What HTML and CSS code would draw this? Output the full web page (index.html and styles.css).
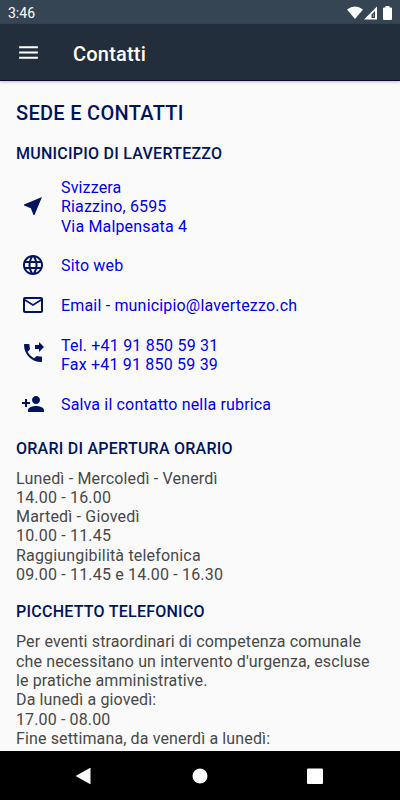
FILE: index.html
```html
<!DOCTYPE html>
<html lang="it">

<head>
    <meta charset="UTF-8">
    <meta name="viewport" content="width=device-width, initial-scale=1.0">
    <title>Contatti</title>
    <link rel="stylesheet" href="styles.css">
</head>

<body>
    <div class="status-bar">
        <span>3:46</span>
        <div class="status-icons">
            <svg class="wifi" viewBox="0 0 16 14"><path d="M0 3.500Q8-2.500 16 3.500L8 13z"/></svg>
            <svg class="signal" viewBox="0 0 14 14"><path fill-rule="evenodd" d="M0 13.500L13 .5v13zM7.500 12H11V5L7.500 8.500z"/><path d="M9 8h1v3H9z" opacity=".4"/></svg>
            <svg class="battery" viewBox="0 0 9 14"><path d="M2.500 0h4v1.500H8q1 0 1 1V13q0 1-1 1H1q-1 0-1-1V2.500q0-1 1-1h1.500z"/></svg>
        </div>
    </div>

    <header class="toolbar">
        <svg class="menu" viewBox="0 0 24 24"><path d="M3 18h18v-2H3v2zm0-5h18v-2H3v2zm0-7v2h18V6H3z"/></svg>
        <h1>Contatti</h1>
    </header>

    <main class="content">
        <h2>SEDE E CONTATTI</h2>

        <h3>MUNICIPIO DI LAVERTEZZO</h3>
        <div class="contact address">
            <svg viewBox="0 0 24 24"><path d="M21 3L3 10.530v.98l6.840 2.650L12.480 21h.98L21 3z"/></svg>
            <a>Svizzera<br>Riazzino, 6595<br>Via Malpensata 4</a>
        </div>
        <div class="contact">
            <svg viewBox="0 0 24 24"><path d="M11.990 2C6.470 2 2 6.480 2 12s4.470 10 9.990 10C17.520 22 22 17.520 22 12S17.520 2 11.990 2zm6.930 6h-2.950c-.32-1.250-.78-2.450-1.380-3.560 1.840.63 3.370 1.910 4.330 3.560zM12 4.040c.83 1.200 1.480 2.530 1.910 3.960h-3.820c.43-1.430 1.080-2.760 1.910-3.960zM4.260 14C4.100 13.360 4 12.690 4 12s.1-1.360.26-2h3.380c-.08.66-.14 1.320-.14 2s.06 1.340.14 2H4.260zm.82 2h2.950c.32 1.250.78 2.450 1.380 3.560-1.840-.63-3.370-1.900-4.330-3.560zm2.950-8H5.080c.96-1.660 2.490-2.930 4.330-3.560C8.810 5.550 8.350 6.750 8.030 8zM12 19.960c-.83-1.200-1.480-2.530-1.910-3.960h3.820c-.43 1.430-1.080 2.760-1.910 3.960zM14.340 14H9.660c-.09-.66-.16-1.320-.16-2s.07-1.350.16-2h4.680c.09.65.16 1.320.16 2s-.07 1.340-.16 2zm.25 5.560c.6-1.110 1.060-2.310 1.380-3.560h2.950c-.96 1.650-2.490 2.930-4.330 3.560zM16.360 14c.08-.66.14-1.320.14-2s-.06-1.340-.14-2h3.380c.16.64.26 1.310.26 2s-.1 1.360-.26 2h-3.380z"/></svg>
            <a>Sito web</a>
        </div>
        <div class="contact email">
            <svg viewBox="0 0 24 24"><path d="M20 4H4c-1.100 0-1.990.9-1.990 2L2 18c0 1.100.9 2 2 2h16c1.100 0 2-.9 2-2V6c0-1.100-.9-2-2-2zm0 14H4V8l8 5 8-5v10zm-8-7L4 6h16l-8 5z"/></svg>
            <a>Email - municipio@lavertezzo.ch</a>
        </div>
        <div class="contact phone">
            <svg viewBox="0 0 24 24"><path d="M18 11l5-5-5-5v3h-4v4h4v3zm2 4.500c-1.250 0-2.450-.2-3.570-.57-.35-.11-.74-.03-1.020.24l-2.200 2.200c-2.830-1.440-5.150-3.750-6.590-6.590l2.200-2.210c.28-.26.36-.65.25-1C8.700 6.450 8.500 5.250 8.500 4c0-.55-.45-1-1-1H4c-.55 0-1 .45-1 1 0 9.390 7.610 17 17 17 .55 0 1-.45 1-1v-3.500c0-.55-.45-1-1-1z"/></svg>
            <a>Tel. +41 91 850 59 31<br>Fax +41 91 850 59 39</a>
        </div>
        <div class="contact save">
            <svg viewBox="0 0 24 24"><path d="M15 12c2.210 0 4-1.790 4-4s-1.790-4-4-4-4 1.790-4 4 1.790 4 4 4zm-9-2V7H4v3H1v2h3v3h2v-3h3v-2H6zm9 4c-2.670 0-8 1.340-8 4v2h16v-2c0-2.660-5.330-4-8-4z"/></svg>
            <a>Salva il contatto nella rubrica</a>
        </div>

        <h3>ORARI DI APERTURA ORARIO</h3>
        <p class="hours">Lunedì - Mercoledì - Venerdì<br>14.00 - 16.00<br>Martedì - Giovedì<br>10.00 - 11.45<br>Raggiungibilità telefonica<br>09.00 - 11.45 e 14.00 - 16.30</p>

        <h3>PICCHETTO TELEFONICO</h3>
        <p>Per eventi straordinari di competenza comunale<br>che necessitano un intervento d'urgenza, escluse<br>le pratiche amministrative.<br>Da lunedì a giovedì:<br>17.00 - 08.00<br>Fine settimana, da venerdì a lunedì:</p>
    </main>

    <nav class="nav-bar">
        <svg viewBox="0 0 20 20"><path d="M15.500 2.200v15.600q0 .6-.6.300L1.400 10.600q-.8-.6 0-1.200L14.900 1.900q.6-.3.600.3z"/></svg>
        <svg viewBox="0 0 20 20"><circle cx="10" cy="10" r="7.500"/></svg>
        <svg viewBox="0 0 20 20"><rect x="2" y="2.500" width="16" height="15.500" rx="1"/></svg>
    </nav>
</body>

</html>
```
FILE: styles.css
```css
* {
    box-sizing: border-box;
}

body {
    margin: 0;
    height: 800px;
    display: flex;
    flex-direction: column;
    overflow: hidden;
    background: #fafafa;
    font-family: Roboto, sans-serif;
}

.status-bar {
    flex: none;
    height: 24px;
    display: flex;
    align-items: center;
    justify-content: space-between;
    padding: 1px 8px 0 8px;
    background: #364554;
    color: white;
    font-size: 14px;
}

.status-icons {
    display: flex;
    fill: white;
}

.status-icons svg {
    height: 14px;
}

.wifi {
    width: 16px;
}

.signal {
    width: 14px;
    margin: 0 5px 0 1px;
}

.battery {
    width: 9px;
}

.toolbar {
    flex: none;
    height: 57px;
    display: flex;
    align-items: center;
    padding: 1px 16px 0;
    background: #232e3c;
    border-bottom: 1px solid #0c0a2c;
    color: white;
    box-shadow: 0 1px 3px rgba(0, 0, 0, 0.25);
}

.menu {
    width: 25px;
    height: 25px;
    margin-right: 32px;
    fill: white;
}

h1 {
    margin: 2px 0 0;
    font-size: 20px;
    font-weight: 500;
    letter-spacing: 0.2px;
}

.content {
    flex: 1;
    min-height: 0;
    overflow: hidden;
    padding: 19px 16px 0;
}

h2 {
    margin: 0 0 17px;
    font-size: 20px;
    font-weight: 500;
    line-height: 26px;
    letter-spacing: 0.3px;
    color: #00145f;
}

h3 {
    margin: 0;
    font-size: 16px;
    font-weight: 500;
    line-height: 22px;
    letter-spacing: 0.25px;
    color: #00145f;
}

.contact {
    display: flex;
    align-items: center;
    padding: 10px 0;
    color: #0000ee;
    font-size: 16px;
    line-height: 19.3px;
    letter-spacing: 0.16px;
}

.contact svg {
    width: 24px;
    height: 24px;
    margin: -3px 16.5px -2px 4.5px;
    fill: #00145f;
}

.address {
    margin-top: 3px;
}

.email {
    height: 41px;
    letter-spacing: 0.18px;
}

.contact.phone svg {
    margin-top: -6px;
}

.phone {
    letter-spacing: 0.2px;
}

.save {
    margin-bottom: 13.5px;
}

p {
    margin: 9px 0 17px;
    font-size: 16px;
    line-height: 19.3px;
    letter-spacing: 0.13px;
    color: #484848;
    white-space: nowrap;
}

.hours {
    letter-spacing: 0.18px;
}

.nav-bar {
    flex: none;
    height: 49px;
    display: flex;
    align-items: center;
    justify-content: center;
    gap: 95px;
    background: black;
}

.nav-bar svg {
    width: 20px;
    height: 20px;
    fill: white;
}
```
